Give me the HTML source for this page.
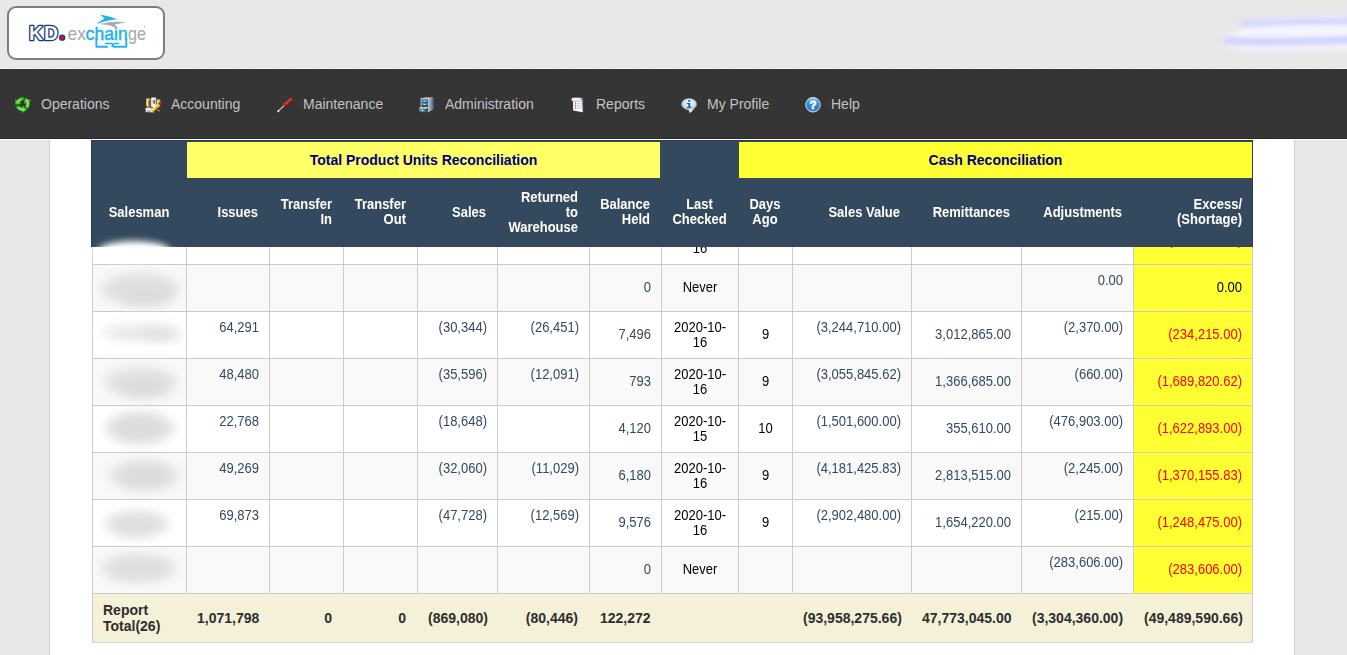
<!DOCTYPE html>
<html>
<head>
<meta charset="utf-8">
<title>Salesman Reconciliation</title>
<style>
html,body{margin:0;padding:0;}
body{width:1347px;height:655px;overflow:hidden;background:#e8e8e8;font-family:"Liberation Sans",sans-serif;position:relative;}
.abs{position:absolute;}
#logo{left:7px;top:6px;width:154px;height:50px;border:2px solid #7d7d7d;border-radius:9px;background:#fff;}
#blur1{left:1218px;top:16px;width:160px;height:32px;}
#nav{left:0;top:69px;width:1347px;height:70px;background:#353535;box-shadow:inset 0 -1px 0 #2a2a2a;}
#dash{left:0;top:68px;width:1347px;height:1px;background:repeating-linear-gradient(90deg,rgba(255,255,255,.85) 0,rgba(255,255,255,.85) 3px,transparent 3px,transparent 5px);}
#wline{left:0;top:139px;width:1347px;height:1px;background:#fff;}
.ni{position:absolute;top:27px;height:16px;line-height:16px;font-size:14px;color:#c3c3c3;white-space:nowrap;}
.ic{position:absolute;top:28px;width:16px;height:16px;}
#panel{left:49px;top:140px;width:1244px;height:520px;background:#fff;border-left:1px solid #cfcfcf;border-right:1px solid #cfcfcf;}
#hdr{left:91px;top:140px;width:1162px;height:107px;background:#34495e;box-shadow:inset 1px 1px 0 #283c54,inset -1px 0 0 #283c54;}
.y1{left:96px;top:2px;width:473px;height:36px;background:#ffff66;}
.y2{left:648px;top:2px;width:513px;height:36px;background:#ffff33;}
.ttl{position:absolute;left:0;right:0;top:10px;text-align:center;font-weight:bold;font-size:14px;line-height:16px;color:#000080;}
.h{position:absolute;color:#fff;font-weight:bold;font-size:13px;line-height:15px;top:38px;height:69px;display:flex;align-items:center;box-sizing:border-box;padding:0 10px;}
.h.r{justify-content:flex-end;text-align:right;padding-right:11px;}
.h.c{justify-content:center;text-align:center;}
.h.two{padding-bottom:2px;}
#grid{left:92px;top:217px;width:1161px;}
table{border-collapse:separate;border-spacing:0;table-layout:fixed;width:1161px;font-size:13px;line-height:15px;color:#34495e;}
td{border-left:1px solid #ccc;border-top:1px solid #ccc;padding:8px 10px;text-align:right;vertical-align:top;box-sizing:border-box;height:47px;overflow:hidden;}
td:last-child{border-right:1px solid #ccc;}
tr.o td{background:#f9f9f9;}
tr.e td{background:#fff;}
td.m{vertical-align:middle;padding-top:7px;padding-bottom:9px;}
td.k{color:#000;text-align:center;vertical-align:middle;}
td.k1{padding-top:7px;padding-bottom:9px;}
tr td.x{background:#ffff33;vertical-align:middle;color:#ff0000;padding-top:7px;padding-bottom:9px;}
tr td.x.b{color:#000;}
tr.t td{background:#f5f1d9;color:#2e2e2e;font-weight:bold;vertical-align:middle;padding-right:11px;border-left-color:#f5f1d9;height:49px;font-size:14px;line-height:16px;padding-top:8px;padding-bottom:8px;}
tr.t td:first-child{text-align:left;border-left-color:#ccc;}
.s{display:inline-block;transform:scaleY(1.07);transform-origin:50% 80%;}
.bl{position:absolute;background:#cfcfcf;border-radius:50%;filter:blur(5.5px);}
</style>
</head>
<body>
<div id="logo" class="abs"><svg width="154" height="50" viewBox="0 0 154 50" style="position:absolute;left:0;top:0;overflow:visible">
<g font-family="Liberation Sans, sans-serif">
<text x="20" y="31.5" font-size="19.4" font-weight="bold" letter-spacing=".9" fill="#fbf6de" stroke="#0a3a90" stroke-width="2.6" paint-order="stroke" stroke-linejoin="round">KD</text>
<circle cx="53.2" cy="29.7" r="2.5" fill="#f00" stroke="#13399a" stroke-width="1.3"/>
<text x="58.6" y="31.8" font-size="19" textLength="18.4" lengthAdjust="spacingAndGlyphs" fill="#a3a7ab">ex</text>
<text x="76.6" y="31.8" font-size="19" textLength="9" lengthAdjust="spacingAndGlyphs" fill="#1cb4ee" stroke="#1cb4ee" stroke-width=".45">c</text>
<text x="85.6" y="31.8" font-size="19" textLength="33" lengthAdjust="spacingAndGlyphs" fill="#1cb4ee" stroke="#1cb4ee" stroke-width=".5">hain</text>
<text x="119" y="31.8" font-size="19" textLength="18" lengthAdjust="spacingAndGlyphs" fill="#a3a7ab">ge</text>
<path d="M87.4 30v8.7h11.5M117.3 30v8.7h-13" fill="none" stroke="#1cb4ee" stroke-width="1.9" stroke-linejoin="round"/>
<path d="M96.5 35.6h5.2q1.6 0 2.2 1.5l.6 1.2M109.6 35.6h-3.4q-1.7 0-2.4 1.6l-.8 1.5" fill="none" stroke="#1cb4ee" stroke-width="1.5" stroke-linecap="round"/>
<circle cx="135.6" cy="18.2" r=".6" fill="#999"/>
<path d="M91 6.4Q100 8 108.2 11.2Q101.6 11.6 97.4 13Q92 14.6 87.2 16.2Q91.4 12.6 95.4 10.4Q93.4 8.2 91 6.4Z" fill="#1cb4ee"/>
<path d="M92.2 15.9Q103 13.2 116 14.3Q108.6 15.4 105.4 16.6Q107 18.4 108.6 20.9Q103.4 17.8 100 17Q96 16.2 92.2 15.9Z" fill="#a4a9af" stroke="#a4a9af" stroke-width=".5"/>
</g></svg></div>
<div id="blur1" class="abs"><svg width="160" height="60" viewBox="0 0 160 60" style="position:absolute;left:0;top:-8px;overflow:visible">
<defs><filter id="bf" filterUnits="userSpaceOnUse" x="-30" y="-30" width="240" height="120"><feGaussianBlur stdDeviation="2.4"/></filter><filter id="bf2" filterUnits="userSpaceOnUse" x="-30" y="-30" width="240" height="120"><feGaussianBlur stdDeviation="2.6"/></filter></defs>
<path d="M5 33Q20 19 50 11L150 9V42L30 42Q7 41 5 33Z" fill="#f6f6fb" filter="url(#bf)"/>
<path d="M26 16Q70 13 150 13" fill="none" stroke="#d4d4ff" stroke-width="7" stroke-linecap="round" filter="url(#bf2)"/>
<path d="M9 33Q60 35 150 31" fill="none" stroke="#d0d0ff" stroke-width="8" stroke-linecap="round" filter="url(#bf2)"/>
<path d="M30 24Q80 24 150 22" fill="none" stroke="#f3f3fb" stroke-width="4" filter="url(#bf2)"/>
</svg></div>
<div id="dash" class="abs"></div>
<div id="wline" class="abs"></div>
<div id="nav" class="abs">
  <svg class="ic" style="left:15px" viewBox="0 0 16 16"><defs><radialGradient id="gg" cx="50%" cy="50%" r="60%"><stop offset="0" stop-color="#8cf76e"/><stop offset=".7" stop-color="#55d83c"/><stop offset="1" stop-color="#2c9a1c"/></radialGradient></defs>
  <g fill="url(#gg)" stroke="#2f9a1e" stroke-width=".8" stroke-linejoin="round"><path d="M8.8 .3C5.6 .4 3.3 1.6 2.2 3.6L.3 2.3.4 7.7 6 6.4 4.5 5.2C5.3 3.8 6.7 3.1 8.3 3.1Z"/><path d="M10.1 1L15.6 3.4 14.2 4.4C15 6.9 14.4 9.7 12.4 11.7L10.2 9.4C11.2 8.2 11.5 6.9 11.2 5.6L9.2 6.4Z"/><path d="M1 9.7L4.2 8.7C5 10 6 10.8 7.2 11.1L7.3 8.9 11.8 12.5 7 15.7 7.1 13.9C4.3 13.6 2.2 12.2 1 9.7Z"/></g></svg>
  <svg class="ic" style="left:145px" viewBox="0 0 16 16"><defs><linearGradient id="gd" x1="0" x2="1"><stop offset="0" stop-color="#b59d3c"/><stop offset=".35" stop-color="#fff1a6"/><stop offset=".7" stop-color="#cdb552"/><stop offset="1" stop-color="#8a7424"/></linearGradient><linearGradient id="wh" x1="0" x2="1"><stop offset="0" stop-color="#dfe6ea"/><stop offset=".5" stop-color="#fff"/><stop offset="1" stop-color="#b9c2c8"/></linearGradient></defs>
  <rect x="1" y="1.6" width="4.7" height="8" rx="1" fill="url(#gd)"/><rect x="3.4" y="3.2" width="1.6" height="5.6" fill="#5d4a12" opacity=".75"/><rect x="11.7" y="2.6" width="4" height="5" rx="1" fill="url(#gd)"/>
  <rect x="6.1" y=".4" width="5.2" height="9.8" rx=".8" fill="url(#wh)"/><rect x="8.2" y="3" width="1.8" height="3.6" fill="#6b5f57"/><rect x="7" y="2.6" width=".8" height="6" fill="#e8dcc8"/>
  <path d="M.4 11.2Q1.4 10.2 3 10.6 5 10 6.6 11L7 13.4 6 15.6 4.6 14.6 3.4 15.8 2.2 14.6.8 15.4Z" fill="#e6eaec"/><path d="M2.6 13.4l.8 1.4M4.4 13.2l.6 1.4" stroke="#555" stroke-width=".5"/>
  <g transform="rotate(-41 11 10.4)"><rect x="5.6" y="8.7" width="8.6" height="3.4" fill="#f3cf1c"/><rect x="5.6" y="8.7" width="8.6" height="1.1" fill="#fff08a"/><rect x="5.6" y="11.2" width="8.6" height=".9" fill="#b98d0a"/><path d="M5.6 8.7L3.2 10.4 5.6 12.1Z" fill="#f4e6c4"/><path d="M3.2 10.4l1-.7v1.4Z" fill="#333"/><rect x="14.2" y="8.7" width="1" height="3.4" fill="#e8eef0"/><path d="M15.2 8.7h1.2q1.2 0 1.2 1.7t-1.2 1.7h-1.2Z" fill="#d21a12"/></g>
  <path d="M8 15.4l1.2-.2M12.6 13.6l1.4-.6v1.4" stroke="#dfe3e5" stroke-width=".7" fill="none"/></svg>
  <svg class="ic" style="left:277px" viewBox="0 0 16 16"><defs><linearGradient id="rd" x1="0" y1="0" x2="0" y2="1"><stop offset="0" stop-color="#e23a30"/><stop offset=".5" stop-color="#c81912"/><stop offset="1" stop-color="#820b08"/></linearGradient><linearGradient id="sh" x1="0" y1="0" x2="0" y2="1"><stop offset="0" stop-color="#f4f8fa"/><stop offset=".6" stop-color="#9fb0ba"/><stop offset="1" stop-color="#4e5d66"/></linearGradient></defs>
  <g transform="rotate(-43 8 8)"><rect x="-1.6" y="7.3" width="9" height="1.4" fill="url(#sh)"/><ellipse cx="-1.1" cy="8" rx="1.15" ry=".9" fill="#f2f6f8"/><path d="M7 5.2L8.6 6.3H16.2Q18.2 6.5 18.2 8T16.2 9.7H8.6L7 10.8Z" fill="url(#rd)"/><path d="M9.6 7h6.8M9.6 8.2h7" stroke="#ffb8b0" stroke-width=".5" stroke-dasharray=".8 .7"/></g></svg>
  <svg class="ic" style="left:418px" viewBox="0 0 16 16"><defs><linearGradient id="bl" x1="0" y1="0" x2="0" y2="1"><stop offset="0" stop-color="#4a9be0"/><stop offset="1" stop-color="#1462b4"/></linearGradient><linearGradient id="sd" x1="0" x2="1"><stop offset="0" stop-color="#aebccb"/><stop offset="1" stop-color="#48607a"/></linearGradient></defs>
  <path d="M11.1 1.6L15.6 .8V12.4L11.1 14.8Z" fill="url(#sd)"/><path d="M2.7 1.4L7 .6H15.6L11.1 1.8H2.7Z" fill="#dfe7ee"/><rect x="2.7" y="1.4" width="8.4" height="13.4" fill="#dbe3ea"/><rect x="3.6" y="2.4" width="6.6" height="12" fill="#2a2f36"/>
  <rect x="4" y="2.9" width="5.8" height="2.8" fill="url(#bl)"/><rect x="4" y="6.1" width="5.8" height="2.7" fill="url(#bl)"/><rect x="5.3" y="3.9" width="2.5" height=".8" fill="#e6f0fa"/><rect x="5.3" y="7" width="2.5" height=".8" fill="#e6f0fa"/>
  <path d="M1.2 10.4L9.6 9.8V11.6L9 11.8 1.2 11.8Z" fill="#f4e07a"/><path d="M1.1 11.6L7.8 12.4V15.8L1.1 14.6Z" fill="url(#bl)"/><path d="M7.8 12.4L9.6 11.4V14.6L7.8 15.8Z" fill="#0f4f94"/><path d="M3.2 13.1l2.5.3v.8l-2.5-.3Z" fill="#e6f0fa"/></svg>
  <svg class="ic" style="left:570px" viewBox="0 0 16 16"><defs><linearGradient id="pg" x1="0" y1="0" x2="0" y2="1"><stop offset="0" stop-color="#fff"/><stop offset="1" stop-color="#dfe5ea"/></linearGradient></defs>
  <path d="M12.2 3.4L13.5 4.2 13.8 15.6 12.2 15.3Z" fill="#3f474d"/><path d="M2.9 3.6H12.3L12.7 15.2 3.2 13.6Z" fill="#fdfdfe"/><path d="M2.9 3.9H12.3V4.9H2.9Z" fill="#c3ccd4"/><rect x="4.9" y="4.9" width=".9" height="7.2" fill="#e2645a"/><path d="M6.4 6.5h5.6M6.4 8.1h5.6M6.4 9.7h5.6M6.4 11.3h5.6" stroke="#b9c6dc" stroke-width=".7"/>
  <rect x="1.5" y=".8" width="11.2" height="3.1" rx="1.5" fill="url(#pg)"/><path d="M10.4 1.4q1.6-.4 2.4.3-.2 1.2-1.4 1.2Z" fill="#59626a"/><path d="M11 1.7q.8-.2 1.2.1" stroke="#dfe5ea" stroke-width=".4" fill="none"/></svg>
  <svg class="ic" style="left:681px" viewBox="0 0 16 16"><defs><radialGradient id="ib" cx="50%" cy="35%" r="70%"><stop offset="0" stop-color="#f4f8fc"/><stop offset=".55" stop-color="#d3dfea"/><stop offset="1" stop-color="#9fb6ca"/></radialGradient></defs>
  <path d="M7.6 12.7L8.8 15.9Q11.4 14.6 13 11.4Z" fill="#e3ecf4" stroke="#8aa4bc" stroke-width=".4"/><ellipse cx="8.1" cy="7.2" rx="7.6" ry="5.8" fill="url(#ib)" stroke="#86a2bc" stroke-width=".5"/><path d="M8 12.4l1 2.6q2-1.2 3.4-3.6Z" fill="#e3ecf4"/>
  <g fill="#1a5fa6"><rect x="7.1" y="3" width="2.1" height="1.8" rx=".4"/><path d="M5.9 5.9H9.3V9.9H10.2V10.9H5.9V9.9H7.4V6.9H5.9Z"/></g></svg>
  <svg class="ic" style="left:805px" viewBox="0 0 16 16"><defs><linearGradient id="hp" x1="0" y1="0" x2="0" y2="1"><stop offset="0" stop-color="#7db8e6"/><stop offset=".35" stop-color="#3c8ed8"/><stop offset="1" stop-color="#2278cc"/></linearGradient></defs>
  <circle cx="8" cy="7.7" r="7.3" fill="url(#hp)" stroke="#c4d8e6" stroke-width="1"/><ellipse cx="8" cy="2.2" rx="3.6" ry="1.1" fill="none" stroke="#d8e8f4" stroke-width=".6" opacity=".9"/><path d="M2 5.4Q8 1.6 14 5.4Q8 3.6 2 5.4Z" fill="#bcd8f0" opacity=".55"/><path d="M3.4 13.4Q8 16.4 12.6 13.4" stroke="#e8c8a8" stroke-width=".5" fill="none"/>
  <text x="8" y="12.4" text-anchor="middle" font-family="Liberation Sans, sans-serif" font-weight="bold" font-size="11.5" fill="#fff" stroke="#fff" stroke-width=".55">?</text></svg>

  <span class="ni" style="left:41px">Operations</span>
  <span class="ni" style="left:171px">Accounting</span>
  <span class="ni" style="left:303px">Maintenance</span>
  <span class="ni" style="left:445px">Administration</span>
  <span class="ni" style="left:596px">Reports</span>
  <span class="ni" style="left:707px">My Profile</span>
  <span class="ni" style="left:831px">Help</span>
</div>
<div id="panel" class="abs"></div>
<div id="grid" class="abs">
<table>
<colgroup><col style="width:94px"><col style="width:83px"><col style="width:74px"><col style="width:74px"><col style="width:80px"><col style="width:92px"><col style="width:72px"><col style="width:77px"><col style="width:54px"><col style="width:119px"><col style="width:110px"><col style="width:112px"><col style="width:120px"></colgroup>
<tr class="e"><td></td><td></td><td></td><td></td><td></td><td></td><td></td><td class="k"><span class="s">2020-10-</span><br><span class="s">16</span></td><td class="k"></td><td></td><td></td><td></td><td class="x"><span class="s">(123,456.00)</span></td></tr>
<tr class="o"><td></td><td></td><td></td><td></td><td></td><td></td><td class="m"><span class="s">0</span></td><td class="k k1"><span class="s">Never</span></td><td class="k"></td><td></td><td class="m"></td><td><span class="s">0.00</span></td><td class="x b"><span class="s">0.00</span></td></tr>
<tr class="e"><td></td><td><span class="s">64,291</span></td><td></td><td></td><td><span class="s">(30,344)</span></td><td><span class="s">(26,451)</span></td><td class="m"><span class="s">7,496</span></td><td class="k"><span class="s">2020-10-</span><br><span class="s">16</span></td><td class="k k1"><span class="s">9</span></td><td><span class="s">(3,244,710.00)</span></td><td class="m"><span class="s">3,012,865.00</span></td><td><span class="s">(2,370.00)</span></td><td class="x"><span class="s">(234,215.00)</span></td></tr>
<tr class="o"><td></td><td><span class="s">48,480</span></td><td></td><td></td><td><span class="s">(35,596)</span></td><td><span class="s">(12,091)</span></td><td class="m"><span class="s">793</span></td><td class="k"><span class="s">2020-10-</span><br><span class="s">16</span></td><td class="k k1"><span class="s">9</span></td><td><span class="s">(3,055,845.62)</span></td><td class="m"><span class="s">1,366,685.00</span></td><td><span class="s">(660.00)</span></td><td class="x"><span class="s">(1,689,820.62)</span></td></tr>
<tr class="e"><td></td><td><span class="s">22,768</span></td><td></td><td></td><td><span class="s">(18,648)</span></td><td></td><td class="m"><span class="s">4,120</span></td><td class="k"><span class="s">2020-10-</span><br><span class="s">15</span></td><td class="k k1"><span class="s">10</span></td><td><span class="s">(1,501,600.00)</span></td><td class="m"><span class="s">355,610.00</span></td><td><span class="s">(476,903.00)</span></td><td class="x"><span class="s">(1,622,893.00)</span></td></tr>
<tr class="o"><td></td><td><span class="s">49,269</span></td><td></td><td></td><td><span class="s">(32,060)</span></td><td><span class="s">(11,029)</span></td><td class="m"><span class="s">6,180</span></td><td class="k"><span class="s">2020-10-</span><br><span class="s">16</span></td><td class="k k1"><span class="s">9</span></td><td><span class="s">(4,181,425.83)</span></td><td class="m"><span class="s">2,813,515.00</span></td><td><span class="s">(2,245.00)</span></td><td class="x"><span class="s">(1,370,155.83)</span></td></tr>
<tr class="e"><td></td><td><span class="s">69,873</span></td><td></td><td></td><td><span class="s">(47,728)</span></td><td><span class="s">(12,569)</span></td><td class="m"><span class="s">9,576</span></td><td class="k"><span class="s">2020-10-</span><br><span class="s">16</span></td><td class="k k1"><span class="s">9</span></td><td><span class="s">(2,902,480.00)</span></td><td class="m"><span class="s">1,654,220.00</span></td><td><span class="s">(215.00)</span></td><td class="x"><span class="s">(1,248,475.00)</span></td></tr>
<tr class="o"><td></td><td></td><td></td><td></td><td></td><td></td><td class="m"><span class="s">0</span></td><td class="k k1"><span class="s">Never</span></td><td class="k"></td><td></td><td class="m"></td><td><span class="s">(283,606.00)</span></td><td class="x"><span class="s">(283,606.00)</span></td></tr>
<tr class="t"><td>Report Total(26)</td><td>1,071,798</td><td>0</td><td>0</td><td>(869,080)</td><td>(80,446)</td><td>122,272</td><td></td><td></td><td>(93,958,275.66)</td><td>47,773,045.00</td><td>(3,304,360.00)</td><td>(49,489,590.66)</td></tr>
</table>
</div>
<div class="abs" style="left:92px;top:642px;width:1161px;height:1px;background:#d6d6d6"></div>
<div id="blobs" class="abs" style="left:93px;top:247px;width:93px;height:346px;overflow:hidden;">
  <div class="bl" style="left:8px;top:26px;width:78px;height:32px;background:#e0e0e0"></div>
  <div class="bl" style="left:30px;top:42px;width:50px;height:14px;background:#dadada"></div>
  <div class="bl" style="left:9px;top:78px;width:80px;height:15px;background:#e6e6e6"></div>
  <div class="bl" style="left:50px;top:84px;width:36px;height:8px;background:#dedede"></div>
  <div class="bl" style="left:12px;top:120px;width:72px;height:30px;background:#e1e1e1"></div>
  <div class="bl" style="left:30px;top:134px;width:44px;height:14px;background:#dadada"></div>
  <div class="bl" style="left:12px;top:165px;width:70px;height:32px;background:#e1e1e1"></div>
  <div class="bl" style="left:24px;top:172px;width:44px;height:18px;background:#dadada"></div>
  <div class="bl" style="left:16px;top:213px;width:70px;height:30px;background:#e1e1e1"></div>
  <div class="bl" style="left:30px;top:222px;width:44px;height:16px;background:#dadada"></div>
  <div class="bl" style="left:12px;top:264px;width:64px;height:26px;background:#e2e2e2"></div>
  <div class="bl" style="left:22px;top:272px;width:40px;height:14px;background:#dedede"></div>
  <div class="bl" style="left:8px;top:307px;width:76px;height:28px;background:#e1e1e1"></div>
  <div class="bl" style="left:20px;top:314px;width:50px;height:16px;background:#dedede"></div>
</div>
<div id="hdr" class="abs">
  <div class="abs y1"><div class="ttl">Total Product Units Reconciliation</div></div>
  <div class="abs y2"><div class="ttl">Cash Reconciliation</div></div>
  <div class="h c" style="left:1px;width:94px"><div><span class="s">Salesman</span></div></div>
  <div class="h r" style="left:95px;width:83px"><div><span class="s">Issues</span></div></div>
  <div class="h r two" style="left:178px;width:74px"><div><span class="s">Transfer</span><br><span class="s">In</span></div></div>
  <div class="h r two" style="left:252px;width:74px"><div><span class="s">Transfer</span><br><span class="s">Out</span></div></div>
  <div class="h r" style="left:326px;width:80px"><div><span class="s">Sales</span></div></div>
  <div class="h r" style="left:406px;width:92px"><div><span class="s">Returned</span><br><span class="s">to</span><br><span class="s">Warehouse</span></div></div>
  <div class="h r two" style="left:498px;width:72px"><div><span class="s">Balance</span><br><span class="s">Held</span></div></div>
  <div class="h c two" style="left:570px;width:77px"><div><span class="s">Last</span><br><span class="s">Checked</span></div></div>
  <div class="h c two" style="left:647px;width:54px"><div><span class="s">Days</span><br><span class="s">Ago</span></div></div>
  <div class="h r" style="left:701px;width:119px"><div><span class="s">Sales Value</span></div></div>
  <div class="h r" style="left:820px;width:110px"><div><span class="s">Remittances</span></div></div>
  <div class="h r" style="left:930px;width:112px"><div><span class="s">Adjustments</span></div></div>
  <div class="h r two" style="left:1042px;width:119px;padding-right:10px"><div><span class="s">Excess/</span><br><span class="s">(Shortage)</span></div></div>
</div>
<div class="abs" style="left:91px;top:232px;width:100px;height:34px;overflow:hidden;pointer-events:none"><div class="bl" style="left:8px;top:9px;width:70px;height:18px;background:#fff;filter:blur(3.5px)"></div><div class="bl" style="left:0px;top:15px;width:90px;height:14px;background:#fff;filter:blur(2.5px)"></div></div>
</body>
</html>
